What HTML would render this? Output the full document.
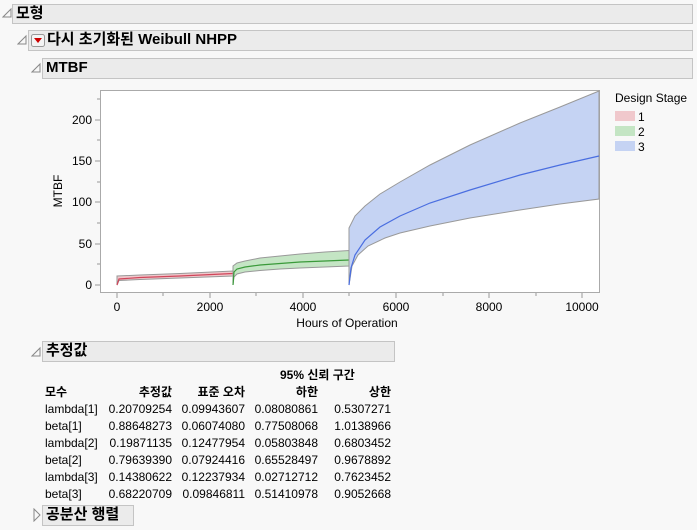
<!DOCTYPE html>
<html><head><meta charset="utf-8"><style>
body{margin:0;width:697px;height:530px;background:#f8f8f8;font-family:"Liberation Sans","Noto Sans CJK KR",sans-serif;position:relative;overflow:hidden;color:#000}
.h{position:absolute;background:#ebebeb;border:1px solid #c4c4c4;font-weight:bold;font-size:15px;line-height:18px;padding-left:3px;box-sizing:border-box}
.tri{position:absolute;font-size:10px;color:#777}
.t{position:absolute;font-size:12px;white-space:nowrap}
.r{text-align:right}
</style></head><body>
<svg class="tri" style="left:2px;top:7px" width="10" height="12"><path d="M1 10 L9 10 L9 2 Z" fill="none" stroke="#888"/></svg>
<div class="h" style="left:12px;top:4px;width:681px;height:20px">모형</div>
<svg class="tri" style="left:17px;top:34px" width="10" height="12"><path d="M1 10 L9 10 L9 2 Z" fill="none" stroke="#888"/></svg>
<div class="h" style="left:28px;top:30px;width:665px;height:21px;padding-left:18px">다시 초기화된 Weibull NHPP</div>
<svg style="position:absolute;left:31px;top:34px" width="14" height="13"><rect x="0.5" y="0.5" width="13" height="12" rx="2" fill="#f4f4f4" stroke="#999"/><path d="M3 4 L11 4 L7 9 Z" fill="#c00"/></svg>
<svg class="tri" style="left:31px;top:62px" width="10" height="12"><path d="M1 10 L9 10 L9 2 Z" fill="none" stroke="#888"/></svg>
<div class="h" style="left:42px;top:58px;width:651px;height:21px">MTBF</div>

<svg style="position:absolute;left:0;top:0" width="697" height="340">
<rect x="100.5" y="90.5" width="499" height="202" fill="#fff" stroke="#aaa"/>
<g stroke="#999" fill="none">
<path d="M95 285H100M95 244H100M95 202H100M95 161H100M95 120H100M97 264H100M97 223H100M97 182H100M97 140H100M97 99H100"/>
<path d="M117 293V298M210 293V298M303 293V298M396 293V298M489 293V298M582 293V298M163 293V296M256 293V296M349 293V296M443 293V296M536 293V296"/>
</g>
<g font-size="12" text-anchor="end" fill="#000">
<text x="92" y="289">0</text><text x="92" y="248">50</text><text x="92" y="206">100</text><text x="92" y="165">150</text><text x="92" y="124">200</text></g>
<g font-size="12" text-anchor="middle"><text x="117" y="311">0</text><text x="210" y="311">2000</text><text x="303" y="311">4000</text><text x="396" y="311">6000</text><text x="489" y="311">8000</text><text x="582" y="311">10000</text>
<text x="347" y="327">Hours of Operation</text>
<text transform="translate(62 191) rotate(-90)" font-size="12">MTBF</text></g>
<!-- stage1 -->
<path d="M117 285 L117 276 L140 275 L180 273.5 L233 271 L233 276 L180 278 L140 279.5 L119 280.5 Z" fill="#f0c8cc" stroke="#999" stroke-width="1"/>
<path d="M117 285 L119 279 L140 277.5 L180 276 L233 273.5" fill="none" stroke="#d0455a" stroke-width="1.2"/>
<!-- stage2 -->
<path d="M233 285 L233 266 L237 263 L245 261 L260 258 L280 256 L300 254 L325 252 L349 250.5 L349 266 L325 267 L300 268 L280 269 L260 270.5 L245 272 L237 274 L234 277 Z" fill="#c4e5c4" stroke="#999"/>
<path d="M233 285 L234 272 L237 269 L245 267 L260 265 L280 263.5 L300 262 L325 261 L349 260" fill="none" stroke="#3a9a3a" stroke-width="1.2"/>
<!-- stage3 -->
<path d="M349 285 L349 228 L355 216 L365 206 L380 194 L400 182 L430 165 L470 145 L520 123 L560 107 L599 91 L599 199 L560 204 L520 210 L470 218 L430 226 L400 233 L385 238 L368 246 L358 255 L352 266 Z" fill="#c5d3f3" stroke="#999"/>
<path d="M349 285 L351 268 L355 255 L365 240 L380 227 L400 216 L430 203 L470 190 L520 175 L560 165 L599 156" fill="none" stroke="#4a6ee0" stroke-width="1.2"/>
<text x="615" y="102" font-size="12">Design Stage</text>
<rect x="615" y="111" width="20" height="10" fill="#f0c8cc"/><text x="638" y="121" font-size="12">1</text>
<rect x="615" y="126" width="20" height="10" fill="#c4e5c4"/><text x="638" y="136" font-size="12">2</text>
<rect x="615" y="141" width="20" height="10" fill="#c5d3f3"/><text x="638" y="151" font-size="12">3</text>
</svg>

<svg class="tri" style="left:31px;top:346px" width="10" height="12"><path d="M1 10 L9 10 L9 2 Z" fill="none" stroke="#888"/></svg>
<div class="h" style="left:42px;top:341px;width:353px;height:21px">추정값</div>
<div class="t" style="left:280px;top:366px;font-weight:bold">95% 신뢰 구간</div>
<div class="t" style="left:45px;top:383px;font-weight:bold">모수</div>
<div class="t r" style="left:100px;width:72px;top:383px;font-weight:bold">추정값</div>
<div class="t r" style="left:173px;width:72px;top:383px;font-weight:bold">표준 오차</div>
<div class="t r" style="left:246px;width:72px;top:383px;font-weight:bold">하한</div>
<div class="t r" style="left:319px;width:72px;top:383px;font-weight:bold">상한</div>
<div class="t" style="left:45px;top:401px;line-height:17px">lambda[1]<br>beta[1]<br>lambda[2]<br>beta[2]<br>lambda[3]<br>beta[3]</div>
<div class="t r" style="left:100px;width:72px;top:401px;line-height:17px">0.20709254<br>0.88648273<br>0.19871135<br>0.79639390<br>0.14380622<br>0.68220709</div>
<div class="t r" style="left:173px;width:72px;top:401px;line-height:17px">0.09943607<br>0.06074080<br>0.12477954<br>0.07924416<br>0.12237934<br>0.09846811</div>
<div class="t r" style="left:246px;width:72px;top:401px;line-height:17px">0.08080861<br>0.77508068<br>0.05803848<br>0.65528497<br>0.02712712<br>0.51410978</div>
<div class="t r" style="left:319px;width:72px;top:401px;line-height:17px">0.5307271<br>1.0138966<br>0.6803452<br>0.9678892<br>0.7623452<br>0.9052668</div>
<svg class="tri" style="left:33px;top:508px" width="8" height="14"><path d="M1 1 L7 7 L1 13 Z" fill="none" stroke="#888"/></svg>
<div class="h" style="left:42px;top:505px;width:92px;height:21px">공분산 행렬</div>
</body></html>
